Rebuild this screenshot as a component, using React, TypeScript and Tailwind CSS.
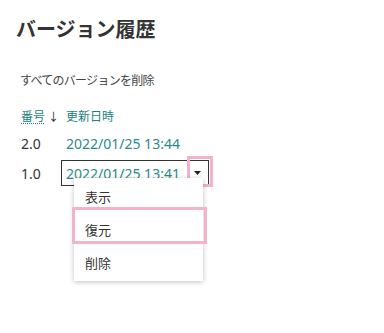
const font = { fontFamily: '"Noto Sans", "Noto Sans CJK JP", sans-serif' };

function Caret() {
  return (
    <svg width="7" height="4" viewBox="0 0 7 4" aria-hidden>
      <path d="M0 0h7L3.5 4z" fill="#222" />
    </svg>
  );
}

const menu = ["表示", "復元", "削除"];

export default function App() {
  return (
    <div className="w-[384px] h-[333px] bg-white text-[#333] overflow-hidden" style={font}>
      <div className="pt-[15px] pl-[16px]">
        <h1 className="text-[20px] leading-[30px] font-bold text-[#333]">バージョン履歴</h1>

        <p className="mt-[28px] pl-[4px] text-[12px] leading-[16px] tracking-[-0.06em] text-[#444]">
          すべてのバージョンを削除
        </p>

        <div className="mt-[16px] pl-[5px] text-[14px]">
          {/* header */}
          <div className="flex items-center h-[24px]">
            <div className="w-[45px] flex items-center gap-[3px]">
              <span className="text-[12px] text-[#1f7f80] underline decoration-dotted underline-offset-2">番号</span>
              <span className="text-[11px] text-[#222]">↓</span>
            </div>
            <span className="text-[12px] text-[#1f7f80]">更新日時</span>
          </div>

          {/* row 2.0 */}
          <div className="flex items-center h-[29px]">
            <div className="w-[45px] text-[#333]">2.0</div>
            <span className="text-[#2b8a8a]">2022/01/25 13:44</span>
          </div>

          {/* row 1.0 */}
          <div className="flex items-center h-[30px]">
            <div className="w-[40px] text-[#333]">1.0</div>
            <div className="relative">
              <div className="w-[148px] h-[26px] border border-[#333] flex items-center pl-[4px] pr-[7px] justify-between">
                <span className="text-[#2b8a8a]">2022/01/25 13:41</span>
                <Caret />
              </div>

              {/* callout on caret */}
              <div className="absolute left-[126px] top-[-4px] w-[26px] h-[31px] border-[3px] border-[#f2b3cb]" />

              {/* context menu */}
              <div className="absolute left-[13px] top-[18px] w-[129px] bg-white shadow-[0_1px_5px_rgba(0,0,0,0.25)] pt-[3px] pb-[1px] z-10">
                {menu.map((m) => (
                  <div key={m} className="h-[33px] flex items-center pl-[11px] text-[13px] text-[#333]">
                    {m}
                  </div>
                ))}
              </div>

              {/* callout on 復元 */}
              <div className="absolute left-[11px] top-[47px] w-[135px] h-[37px] border-[3px] border-[#f2b3cb] z-20" />
            </div>
          </div>
        </div>
      </div>
    </div>
  );
}
